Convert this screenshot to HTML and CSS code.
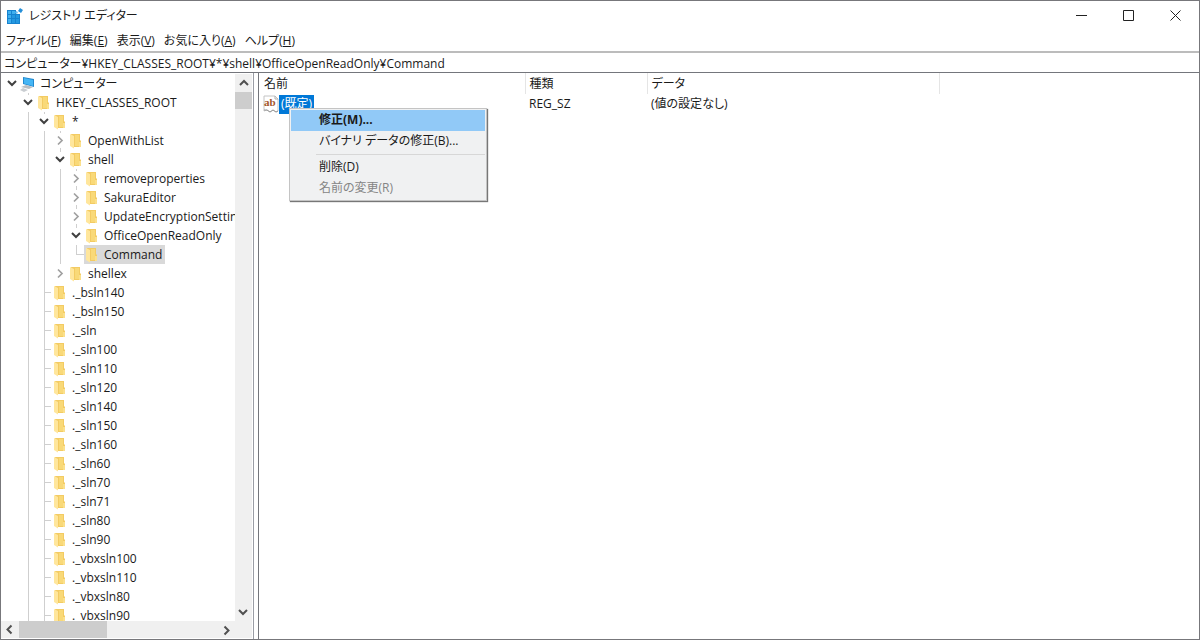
FILE: index.html
```html
<!DOCTYPE html>
<html lang="ja">
<head>
<meta charset="utf-8">
<title>レジストリ エディター</title>
<link rel="stylesheet" href="styles.css">
</head>
<body>
<svg class="defs" aria-hidden="true">
  <symbol id="folder" viewBox="0 0 16 16">
    <path d="M3 1h9v6l1 1v6H5z" fill="#f3cb63"/>
    <path d="M7 2h4v11H7z" fill="#f9d978"/>
    <path d="M2 1l4 2v12.500L2 13z" fill="#ffe69c"/>
    <path d="M11 9h2v5h-2z" fill="#fbe08c"/>
  </symbol>
  <symbol id="open" viewBox="0 0 16 19"><path d="M4 7l4 4 4-4" fill="none" stroke="#404040" stroke-width="2"/></symbol>
  <symbol id="closed" viewBox="0 0 16 19"><path d="M6 5.500l4 4-4 4" fill="none" stroke="#a0a0a0" stroke-width="1.700"/></symbol>
  <symbol id="arrow" viewBox="0 0 16 16"><path d="M4 10l4-4 4 4" fill="none" stroke="#505050" stroke-width="2"/></symbol>
</svg>
<div class="window">
  <header class="titlebar">
    <svg class="app-icon" viewBox="0 0 16 16" aria-hidden="true">
      <path d="M0 2h9v4h4v10H0z" fill="#1683d0"/>
      <path d="M1 3h3v3H1zM5 3h3v3H5zM1 7h3v3H1zM1 11h3v4H1z" fill="#3fb0ef"/>
      <path d="M5 7h3v3H5zM9 7h3v3H9zM5 11h3v4H5zM9 11h3v4H9z" fill="#2498e0"/>
      <path d="M13 0l3 2-2 3-3-2z" fill="#258fd8"/><path d="M9 3l2 1-1 2-2-1z" fill="#69bdf0"/>
    </svg>
    <h1 class="title">レジストリ エディター</h1>
    <button class="win-btn" aria-label="最小化"><svg viewBox="0 0 11 11"><path d="M0 5.500h11"/></svg></button>
    <button class="win-btn" aria-label="最大化"><svg viewBox="0 0 11 11"><path d="M.5.5h10v10H.5z"/></svg></button>
    <button class="win-btn" aria-label="閉じる"><svg viewBox="0 0 11 11"><path d="M.5.5l10 10M10.500.5l-10 10"/></svg></button>
  </header>
  <nav class="menubar">
    <button>ファイル(<u>F</u>)</button><button>編集(<u>E</u>)</button><button>表示(<u>V</u>)</button><button>お気に入り(<u>A</u>)</button><button>ヘルプ(<u>H</u>)</button>
  </nav>
  <input class="address" type="text" aria-label="アドレス" value="コンピューター¥HKEY_CLASSES_ROOT¥*¥shell¥OfficeOpenReadOnly¥Command">
  <main class="panes">
    <section class="tree-pane">
      <ul class="tree" role="tree">
        <li><button class="toggle" aria-label="折りたたむ"><svg><use href="#open"/></svg></button><span class="item"><svg class="icon" viewBox="0 0 16 16"><path d="M3 1l11 2v8L3 8z" fill="#2289cf"/><path d="M4 2l9 2v6L4 7.500z" fill="#45b6f5"/><path d="M1 11l5-2 7 2-4 2z" fill="#b9bec3"/><path d="M0 14l3-2 5 2-4 2z" fill="#c9cdd1"/></svg>コンピューター</span></li>
        <li><i></i><button class="toggle stub-top" aria-label="折りたたむ"><svg><use href="#open"/></svg></button><span class="item"><svg class="icon"><use href="#folder"/></svg>HKEY_CLASSES_ROOT</span></li>
        <li><i></i><i class="line"></i><button class="toggle stub-top" aria-label="折りたたむ"><svg><use href="#open"/></svg></button><span class="item"><svg class="icon"><use href="#folder"/></svg>*</span></li>
        <li><i></i><i class="line"></i><i class="line"></i><button class="toggle stub-top stub-end" aria-label="展開"><svg><use href="#closed"/></svg></button><span class="item"><svg class="icon"><use href="#folder"/></svg>OpenWithList</span></li>
        <li><i></i><i class="line"></i><i class="line"></i><button class="toggle stub-top" aria-label="折りたたむ"><svg><use href="#open"/></svg></button><span class="item"><svg class="icon"><use href="#folder"/></svg>shell</span></li>
        <li><i></i><i class="line"></i><i class="line"></i><i class="line"></i><button class="toggle stub-top stub-end" aria-label="展開"><svg><use href="#closed"/></svg></button><span class="item"><svg class="icon"><use href="#folder"/></svg>removeproperties</span></li>
        <li><i></i><i class="line"></i><i class="line"></i><i class="line"></i><button class="toggle stub-top stub-end" aria-label="展開"><svg><use href="#closed"/></svg></button><span class="item"><svg class="icon"><use href="#folder"/></svg>SakuraEditor</span></li>
        <li><i></i><i class="line"></i><i class="line"></i><i class="line"></i><button class="toggle stub-top stub-end" aria-label="展開"><svg><use href="#closed"/></svg></button><span class="item"><svg class="icon"><use href="#folder"/></svg>UpdateEncryptionSettings</span></li>
        <li><i></i><i class="line"></i><i class="line"></i><i class="line"></i><button class="toggle stub-top" aria-label="折りたたむ"><svg><use href="#open"/></svg></button><span class="item"><svg class="icon"><use href="#folder"/></svg>OfficeOpenReadOnly</span></li>
        <li><i></i><i class="line"></i><i class="line"></i><i class="line"></i><i></i><i class="corner"></i><span class="item selected"><svg class="icon"><use href="#folder"/></svg>Command</span></li>
        <li><i></i><i class="line"></i><i class="line"></i><button class="toggle" aria-label="展開"><svg><use href="#closed"/></svg></button><span class="item"><svg class="icon"><use href="#folder"/></svg>shellex</span></li>
        <li><i></i><i class="line"></i><i class="line branch"></i><span class="item"><svg class="icon"><use href="#folder"/></svg>._bsln140</span></li>
        <li><i></i><i class="line"></i><i class="line branch"></i><span class="item"><svg class="icon"><use href="#folder"/></svg>._bsln150</span></li>
        <li><i></i><i class="line"></i><i class="line branch"></i><span class="item"><svg class="icon"><use href="#folder"/></svg>._sln</span></li>
        <li><i></i><i class="line"></i><i class="line branch"></i><span class="item"><svg class="icon"><use href="#folder"/></svg>._sln100</span></li>
        <li><i></i><i class="line"></i><i class="line branch"></i><span class="item"><svg class="icon"><use href="#folder"/></svg>._sln110</span></li>
        <li><i></i><i class="line"></i><i class="line branch"></i><span class="item"><svg class="icon"><use href="#folder"/></svg>._sln120</span></li>
        <li><i></i><i class="line"></i><i class="line branch"></i><span class="item"><svg class="icon"><use href="#folder"/></svg>._sln140</span></li>
        <li><i></i><i class="line"></i><i class="line branch"></i><span class="item"><svg class="icon"><use href="#folder"/></svg>._sln150</span></li>
        <li><i></i><i class="line"></i><i class="line branch"></i><span class="item"><svg class="icon"><use href="#folder"/></svg>._sln160</span></li>
        <li><i></i><i class="line"></i><i class="line branch"></i><span class="item"><svg class="icon"><use href="#folder"/></svg>._sln60</span></li>
        <li><i></i><i class="line"></i><i class="line branch"></i><span class="item"><svg class="icon"><use href="#folder"/></svg>._sln70</span></li>
        <li><i></i><i class="line"></i><i class="line branch"></i><span class="item"><svg class="icon"><use href="#folder"/></svg>._sln71</span></li>
        <li><i></i><i class="line"></i><i class="line branch"></i><span class="item"><svg class="icon"><use href="#folder"/></svg>._sln80</span></li>
        <li><i></i><i class="line"></i><i class="line branch"></i><span class="item"><svg class="icon"><use href="#folder"/></svg>._sln90</span></li>
        <li><i></i><i class="line"></i><i class="line branch"></i><span class="item"><svg class="icon"><use href="#folder"/></svg>._vbxsln100</span></li>
        <li><i></i><i class="line"></i><i class="line branch"></i><span class="item"><svg class="icon"><use href="#folder"/></svg>._vbxsln110</span></li>
        <li><i></i><i class="line"></i><i class="line branch"></i><span class="item"><svg class="icon"><use href="#folder"/></svg>._vbxsln80</span></li>
        <li><i></i><i class="line"></i><i class="line branch"></i><span class="item"><svg class="icon"><use href="#folder"/></svg>._vbxsln90</span></li>
      </ul>
      <div class="vscroll">
        <button aria-label="上へ"><svg><use href="#arrow"/></svg></button>
        <div class="thumb"></div>
        <button class="down" aria-label="下へ"><svg><use href="#arrow"/></svg></button>
      </div>
      <div class="hscroll">
        <button class="left" aria-label="左へ"><svg><use href="#arrow"/></svg></button>
        <div class="thumb"></div>
        <button class="right" aria-label="右へ"><svg><use href="#arrow"/></svg></button>
      </div>
    </section>
    <section class="list-pane">
      <table class="values">
        <colgroup><col class="col-name"><col class="col-type"><col class="col-data"><col></colgroup>
        <thead><tr><th>名前</th><th>種類</th><th>データ</th><td></td></tr></thead>
        <tbody><tr>
          <td><div class="value">
            <svg class="ab" viewBox="0 0 16 18" aria-hidden="true"><path d="M1 1h11l3 3v12l-2 1-3-2-3 2-3-2-3 1z" fill="#fff" stroke="#c4c4c4"/><path d="M12 1v3h3" fill="none" stroke="#b0b0b0"/><path d="M1 15l3 0 3 2 3-2 3 2 2-1" fill="none" stroke="#999"/><text x="1" y="11" class="ab-text">ab</text></svg>
            <span class="value-name">(既定)</span>
            <div class="context-menu" role="menu">
              <button class="default" role="menuitem">修正(M)...</button>
              <button role="menuitem">バイナリ データの修正(B)...</button>
              <hr>
              <button role="menuitem">削除(D)</button>
              <button role="menuitem" disabled>名前の変更(R)</button>
            </div>
          </div></td>
          <td>REG_SZ</td><td>(値の設定なし)</td><td></td>
        </tr></tbody>
      </table>
    </section>
  </main>
</div>
</body>
</html>
```
FILE: styles.css
```css
* { box-sizing: border-box; }
body {
  margin: 0;
  color: #1a1a1a;
  font: 12px/18px "Open Sans", "Noto Sans CJK JP", sans-serif;
  font-feature-settings: "palt";
}
button, input {
  margin: 0; padding: 0; border: 0;
  background: none; color: inherit;
  font: inherit; font-feature-settings: inherit;
}
.defs { display: none; }
.window {
  display: flex; flex-direction: column;
  height: 100vh;
  background: #fff;
  border: 1px solid #77777b;
}

.titlebar { display: flex; align-items: center; height: 29px; padding-left: 6px; flex: none; }
.app-icon { width: 16px; height: 16px; margin-right: 6px; }
.title { flex: 1; margin: 0; font-size: 12px; font-weight: 400; }
.win-btn { width: 47px; height: 29px; display: grid; place-items: center; }
.win-btn svg { width: 11px; height: 11px; fill: none; stroke: #222; }

.menubar { display: flex; gap: 9px; height: 21px; padding-left: 5px; flex: none; align-items: center; }

.address {
  flex: none; width: 100%; height: 21px; padding-left: 3px;
  border-top: 2px solid #bcbcbc;
}

.panes { display: flex; flex: 1; min-height: 0; border-top: 1px solid #74767c; }

.tree-pane {
  flex: none; width: 253px;
  display: grid; grid-template: minmax(0, 1fr) 17px / minmax(0, 1fr) 17px;
  padding: 1px 1px 1px 0;
  border-right: 1px solid #9a9da5;
}
.tree { list-style: none; margin: 0; padding: 0 0 0 3px; overflow: hidden; }
.tree li { display: flex; height: 19px; white-space: nowrap; }
.tree i, .toggle { flex: none; width: 16px; height: 19px; }
.toggle svg { display: block; width: 16px; height: 19px; }
.line { background: linear-gradient(#cfcfcf, #cfcfcf) 8px 0 / 1px 100% no-repeat; }
.branch {
  background:
    linear-gradient(#cfcfcf, #cfcfcf) 8px 0 / 1px 100% no-repeat,
    linear-gradient(#cfcfcf, #cfcfcf) 8px 9px / 7px 1px no-repeat;
}
.corner {
  margin-left: -8px; margin-right: 0;
  background:
    linear-gradient(#cfcfcf, #cfcfcf) 0 0 / 1px 10px no-repeat,
    linear-gradient(#cfcfcf, #cfcfcf) 0 9px / 8px 1px no-repeat;
}
.tree i.corner { width: 8px; }
.stub-top { background: linear-gradient(#cfcfcf, #cfcfcf) 8px 0 / 1px 2px no-repeat; }
.stub-end {
  background:
    linear-gradient(#cfcfcf, #cfcfcf) 8px 0 / 1px 2px no-repeat,
    linear-gradient(#cfcfcf, #cfcfcf) 8px 17px / 1px 2px no-repeat;
}
.item { display: flex; align-items: center; gap: 4px; padding-right: 3px; }
.selected { background: #d9d9d9; }
.icon { width: 16px; height: 16px; flex: none; }

.vscroll, .hscroll { display: flex; background: #f0f0f0; }
.vscroll { flex-direction: column; }
.hscroll { grid-column: 1 / -1; padding-right: 17px; }
.vscroll button, .hscroll button { display: grid; place-items: center; width: 17px; height: 18px; }
.vscroll svg, .hscroll svg { width: 16px; height: 16px; }
.thumb { background: #cdcdcd; }
.vscroll .thumb { height: 17px; }
.hscroll .thumb { width: 88px; margin-left: 1px; }
.down { margin-top: auto; transform: rotate(180deg); }
.left { transform: rotate(-90deg); }
.right { margin-left: auto; transform: rotate(90deg); }

.list-pane { flex: 1; min-width: 0; margin-left: 4px; border-left: 1px solid #74767c; }
.values { width: 100%; table-layout: fixed; border-collapse: collapse; }
.col-name { width: 266px; }
.col-type { width: 122px; }
.col-data { width: 292px; }
.values th, .values td { height: 21px; padding: 0 0 0 4px; font-weight: 400; text-align: left; }
.values th { padding-left: 5px; border-right: 1px solid #e5e5e5; }
.values th:nth-child(n+2) { padding-left: 4px; }
.values tbody td { height: 20px; }
.value { position: relative; display: flex; align-items: center; }
.ab { width: 16px; height: 18px; }
.ab-text { font: bold 11px "Liberation Serif", serif; fill: #a4562a; }
.value-name { padding: 0 2px; height: 19px; background: #0078d7; color: #fff; }

.context-menu {
  position: absolute; left: 26px; top: 13px; width: 198px; z-index: 1;
  padding: 1px;
  background: #f0f1f2; border: 1px solid #c4c4c4;
  box-shadow: 1px 1px 1px #777;
}
.context-menu button { display: block; width: 100%; height: 21px; padding-left: 28px; text-align: left; }
.context-menu .default { background: #91c9f7; font-weight: 700; }
.context-menu button:disabled { color: #858585; }
.context-menu hr { margin: 2px 0 2px 25px; border: 0; border-top: 1px solid #d7d7d7; }
```
